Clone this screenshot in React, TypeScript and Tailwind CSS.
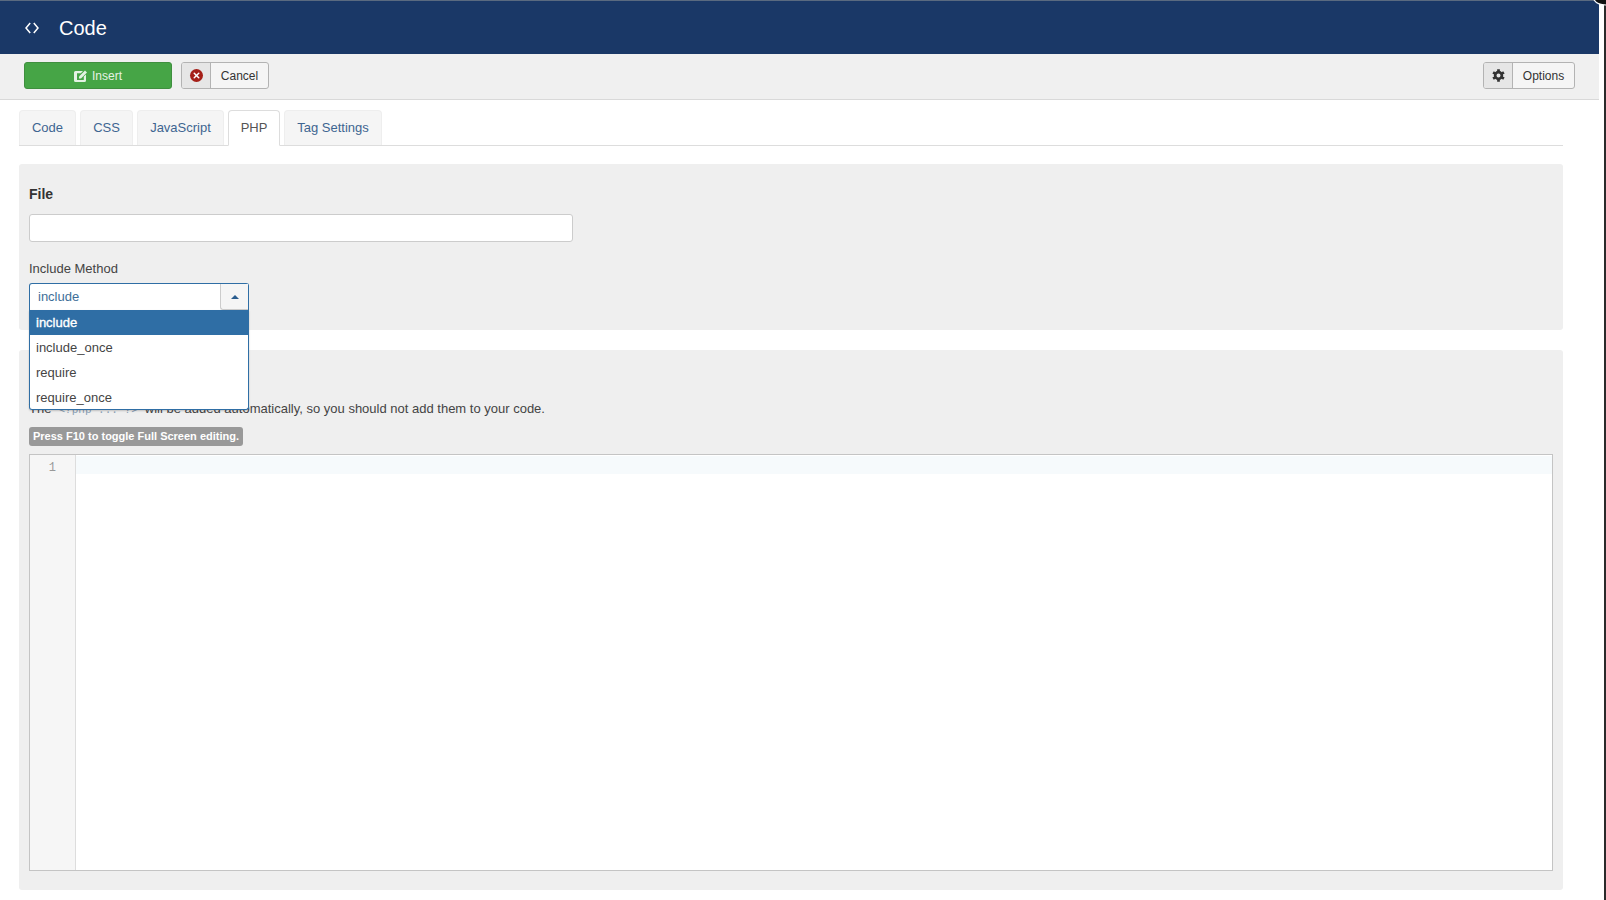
import { X } from 'lucide-react'

const tabs = ['Code', 'CSS', 'JavaScript', 'PHP', 'Tag Settings']
const tabWidths = ['w-[57px]', 'w-[53px]', 'w-[87px]', 'w-[52px]', 'w-[98px]']
const options = ['include', 'include_once', 'require', 'require_once']

function CodeIcon() {
  return (
    <svg viewBox="0 0 14 12" className="w-[14px] h-[12px]" fill="none" stroke="currentColor" strokeWidth={1.5}>
      <path d="M5.2 1 L1 6 L5.2 11" />
      <path d="M8.8 1 L13 6 L8.8 11" />
    </svg>
  )
}

function EditIcon() {
  return (
    <svg viewBox="0 0 14 14" className="w-[14px] h-[14px]" fill="currentColor">
      <path d="M1.5 2H9L6.8 4.2H3v6.8h6.8V7.6L12 5.4V11.5a1.5 1.5 0 0 1-1.5 1.5h-9A1.5 1.5 0 0 1 0 11.5v-8A1.5 1.5 0 0 1 1.5 2z" />
      <path d="M5 7.4 11 1.4 13 3.4 7 9.4H5z" />
    </svg>
  )
}

function GearIcon() {
  return (
    <svg viewBox="0 0 24 24" className="w-[13px] h-[13px] text-[#333]" fill="none" stroke="currentColor">
      <circle cx="12" cy="12" r="6.2" strokeWidth={5} />
      <g strokeWidth={5}>
        <path d="M12 0.5V5" />
        <path d="M12 19V23.5" />
        <path d="M2 6.2 5.9 8.5" />
        <path d="M18.1 15.5 22 17.8" />
        <path d="M2 17.8 5.9 15.5" />
        <path d="M18.1 8.5 22 6.2" />
      </g>
    </svg>
  )
}

export default function App() {
  return (
    <div className="relative flex w-[1606px] h-[900px] overflow-hidden bg-white font-['Liberation_Sans',Arial,sans-serif] text-[13px] text-[#333]">
      <div className="w-[1604px] shrink-0">
        {/* Header */}
        <div className="w-[1599px] h-[54px] border-t border-[#5a6a80] bg-[#1a3867] flex items-center text-white">
          <div className="ml-[25px]">
            <CodeIcon />
          </div>
          <h1 className="ml-[20px] text-[20px] leading-[24px]">Code</h1>
        </div>

        {/* Toolbar */}
        <div className="w-[1599px] h-[46px] bg-[#f0f0f0] border-b border-[#d9d9d9] flex items-center justify-between pl-[24px] pr-[24px] pb-[2px]">
          <div className="flex items-center gap-[9px]">
            <button className="w-[148px] h-[27px] rounded-[3px] bg-[#46a546] border border-[#3f8f3f] text-[#e4f2e4] text-[12px] flex items-center justify-center gap-[4px]">
              <EditIcon />
              Insert
            </button>
            <button className="h-[27px] w-[88px] rounded-[3px] border border-[#b3b3b3] bg-[#f5f5f5] text-[12px] flex items-stretch overflow-hidden">
              <span className="w-[29px] bg-[#e6e6e6] border-r border-[#b3b3b3] flex items-center justify-center">
                <span className="w-[13px] h-[13px] rounded-full bg-[#a51f18] flex items-center justify-center">
                  <X className="w-[9px] h-[9px] text-white" strokeWidth={4} />
                </span>
              </span>
              <span className="flex-1 flex items-center justify-center">Cancel</span>
            </button>
          </div>
          <button className="h-[27px] w-[92px] rounded-[3px] border border-[#b3b3b3] bg-[#f5f5f5] text-[12px] flex items-stretch overflow-hidden">
            <span className="w-[29px] bg-[#e6e6e6] border-r border-[#b3b3b3] flex items-center justify-center">
              <GearIcon />
            </span>
            <span className="flex-1 flex items-center justify-center">Options</span>
          </button>
        </div>

        {/* Tabs */}
        <div className="ml-[19px] mr-[41px] mt-[10px] h-[36px] flex gap-[4px] border-b border-[#ddd]">
          {tabs.map((tab, i) => (
            <div
              key={tab}
              className={
                tab === 'PHP'
                  ? `${tabWidths[i]} h-[36px] rounded-t-[4px] bg-white border border-[#ddd] border-b-white text-[#555] flex items-center justify-center`
                  : `${tabWidths[i]} h-[35px] rounded-t-[4px] bg-[#f5f5f5] border border-b-0 border-[#eee] text-[#3e6591] flex items-center justify-center`
              }
            >
              {tab}
            </div>
          ))}
        </div>

        {/* File panel */}
        <div className="ml-[19px] mr-[41px] mt-[18px] h-[166px] rounded-[3px] bg-[#efefef] px-[10px] pt-[21px]">
          <label className="block font-bold leading-[18px] text-[14px]">File</label>
          <div className="mt-[11px] w-[544px] h-[28px] rounded-[3px] bg-white border border-[#ccc]" />
          <label className="block mt-[18px] leading-[18px] text-[#444]">Include Method</label>

          <div className="relative z-10 mt-[5px] w-[220px]">
            <div className="h-[27px] rounded-t-[3px] bg-white border border-b-0 border-[#2f6ea5] flex">
              <span className="flex-1 pl-[8px] leading-[26px] text-[#3e6e98]">include</span>
              <span className="w-[28px] bg-[#f5f5f5] border-l border-b border-[#ccc] rounded-bl-[3px] flex items-center justify-center">
                <span className="w-0 h-0 border-x-[4px] border-x-transparent border-b-[4px] border-b-[#2a5d8f]" />
              </span>
            </div>
            <ul className="absolute left-0 top-[27px] w-[220px] h-[100px] rounded-b-[3px] bg-white border border-t-0 border-[#2f6ea5] shadow-[0_1px_2px_rgba(0,0,0,0.2)]">
              {options.map((option, i) => (
                <li
                  key={option}
                  className={
                    i === 0
                      ? 'h-[25px] -mx-[1px] px-[7px] leading-[25px] bg-[#2f6ea5] text-white [-webkit-text-stroke:0.35px_white]'
                      : 'h-[25px] px-[6px] leading-[25px] text-[#444]'
                  }
                >
                  {option}
                </li>
              ))}
            </ul>
          </div>
        </div>

        {/* Code panel */}
        <div className="ml-[19px] mr-[41px] mt-[20px] h-[540px] rounded-[3px] bg-[#efefef] px-[10px] pt-[50px]">
          <p className="h-[18px] leading-[18px] whitespace-nowrap text-[#444]">
            The <code className="px-[3.5px] leading-none font-['Liberation_Mono',monospace] text-[11px] text-[#8a9fb5]">{'<?php ... ?>'}</code> will be added automatically, so you should not add them to your code.
          </p>
          <span className="inline-block mt-[9px] h-[19px] w-[214px] rounded-[3px] bg-[#999] text-white font-bold text-[11px] leading-[19px] text-center whitespace-nowrap align-top">
            Press F10 to toggle Full Screen editing.
          </span>

          {/* Editor */}
          <div className="mt-[8px] w-[1524px] h-[417px] bg-white border border-[#c4c4c4] flex">
            <div className="w-[46px] bg-[#f6f6f6] border-r border-[#ddd] text-right pr-[19px] pt-[4px] font-['Liberation_Mono',monospace] text-[12px] leading-[18px] text-[#999]">
              1
            </div>
            <div className="flex-1">
              <div className="h-[18px] mt-[1px] bg-[#f6fafc]" />
            </div>
          </div>
        </div>
      </div>
      <div className="w-[2px] bg-[#2b2b2b]" />

      {/* window corner over the top right */}
      <svg viewBox="0 0 14 6" className="absolute right-0 top-0 w-[14px] h-[6px]" fill="none">
        <path d="M0 0H14V5C9 5 5 3 3 0Z" fill="#111" />
        <path d="M2 0C4 3 9 5 14 5" stroke="#fff" strokeWidth={1.2} />
      </svg>
    </div>
  )
}
